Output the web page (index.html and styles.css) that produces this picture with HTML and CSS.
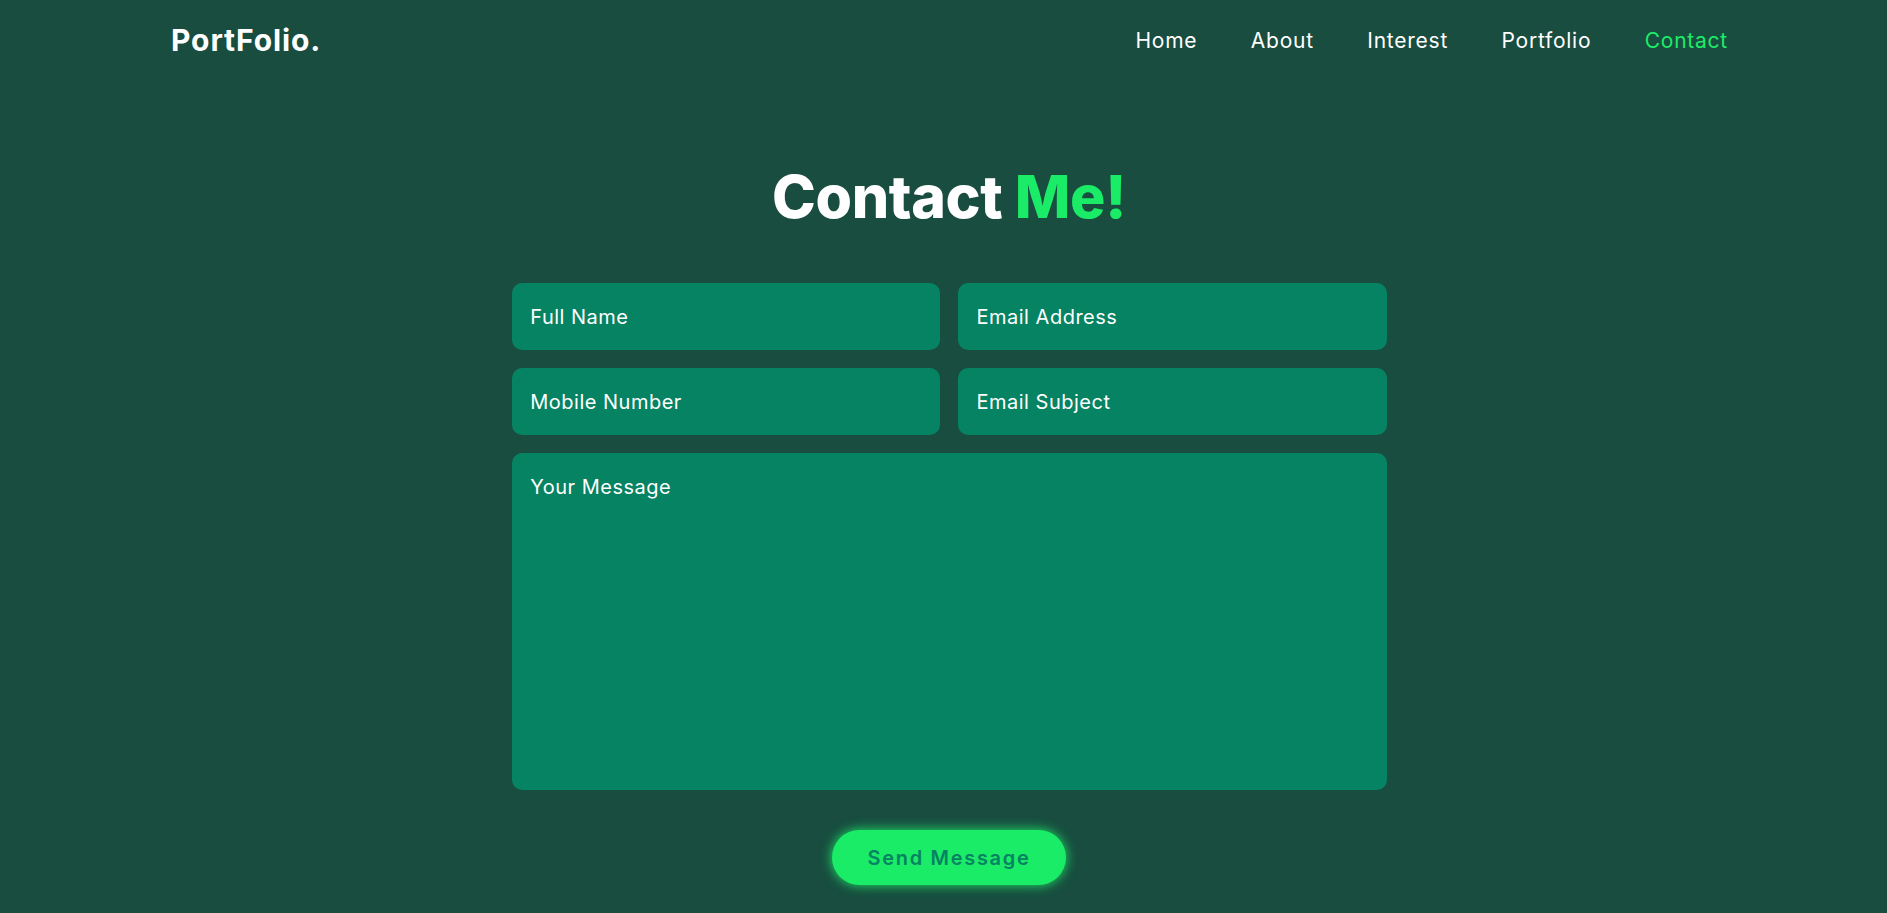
FILE: index.html
```html
<!DOCTYPE html>
<html lang="en">
<head>
  <meta charset="UTF-8" />
  <meta name="viewport" content="width=device-width, initial-scale=1.0" />
  <title>PortFolio - Contact</title>
  <link rel="stylesheet" href="styles.css">
</head>
<body>
  <header class="header">
    <a href="#" class="logo">PortFolio.</a>
    <nav class="navbar">
      <a href="#home">Home</a>
      <a href="#about">About</a>
      <a href="#interest">Interest</a>
      <a href="#portfolio">Portfolio</a>
      <a href="#contact" class="active">Contact</a>
    </nav>
  </header>

  <section class="contact" id="contact">
    <h2 class="heading">Contact <span>Me!</span></h2>

    <form action="#">
      <div class="input-box">
        <input type="text" placeholder="Full Name">
        <input type="email" placeholder="Email Address">
      </div>
      <div class="input-box">
        <input type="text" placeholder="Mobile Number">
        <input type="text" placeholder="Email Subject">
      </div>
      <textarea cols="30" rows="10" placeholder="Your Message"></textarea>
      <input type="submit" value="Send Message" class="btn">
    </form>
  </section>
</body>
</html>
```

FILE: styles.css
```css
* {
  box-sizing: border-box;
  margin: 0;
  padding: 0;
  border: none;
  outline: none;
  text-decoration: none;
  font-family: Inter, 'Noto Sans', sans-serif;
}
body {
  background: #184d3f;
  color: #fff;
  min-height: 100vh;
  overflow: hidden;
}
.header {
  display: flex;
  justify-content: space-between;
  align-items: center;
  padding: 22px 159px 0 171px;
}
.logo {
  font-size: 30px;
  font-weight: 700;
  color: #fff;
  line-height: 36px;
  letter-spacing: 0.9px;
}
.navbar a {
  font-size: 21px;
  color: #fff;
  margin-left: 49px;
  letter-spacing: 0.75px;
}
.navbar a:hover,
.navbar a.active {
  color: #1bec68;
}
.contact {
  padding: 103px 0 20px 11px;
}
.heading {
  text-align: center;
  font-size: 59px;
  font-weight: 800;
  line-height: 72px;
  letter-spacing: -0.4px;
  margin-bottom: 41px;
}
.heading span {
  color: #1bec68;
}
.contact form {
  width: 875px;
  margin: 0 auto;
  text-align: center;
}
.input-box {
  display: flex;
  justify-content: space-between;
}
.input-box input,
.contact textarea {
  width: 100%;
  padding: 18.75px;
  font-size: 20px;
  line-height: 30px;
  letter-spacing: 0.5px;
  color: #fff;
  background: #058362;
  border-radius: 10px;
  margin: 9px 0;
}
.input-box input {
  width: 49%;
  height: 67px;
  padding-top: 0;
  padding-bottom: 0;
}
.contact textarea {
  display: block;
  height: 337px;
  resize: none;
}
::placeholder {
  color: #fff;
  opacity: 1;
}
.btn {
  display: inline-block;
  margin-top: 31px;
  padding: 12.5px 35px;
  height: 55px;
  background: #1bec68;
  border-radius: 40px;
  box-shadow: 0 0 12px #1bec68;
  font-size: 20px;
  line-height: 30px;
  color: #058362;
  letter-spacing: 1.7px;
  font-weight: 600;
  cursor: pointer;
}
```
